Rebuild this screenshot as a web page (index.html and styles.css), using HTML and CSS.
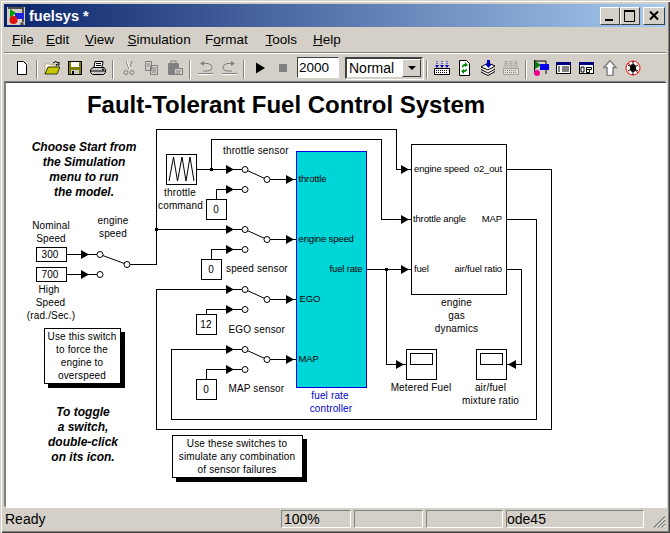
FILE: index.html
```html
<!DOCTYPE html>
<html lang="en">
<head>
    <meta charset="UTF-8">
    <title>fuelsys</title>
    <link rel="stylesheet" href="styles.css">
</head>
<body>
<div class="window">
    <div class="titlebar">
        <svg class="app-icon" width="18" height="18" viewBox="0 0 18 18">
            <rect x="0" y="0" width="18" height="18" fill="#d4d0c8"/>
            <path d="M1 1h15v14" fill="none" stroke="#222" stroke-width="1.5"/>
            <path d="M3 2v9l6-5z" fill="#00a000"/>
            <rect x="8" y="6" width="9" height="6" fill="#2020e0"/>
            <circle cx="6.5" cy="13" r="4" fill="#e01010"/>
            <path d="M15 15v3M13 17h4" stroke="#222"/>
        </svg>
        <span class="title-text">fuelsys *</span>
        <div class="caption-btns">
            <div class="caption-btn"><svg width="18" height="16"><rect x="4" y="11" width="8" height="2" fill="#000"/></svg></div>
            <div class="caption-btn"><svg width="18" height="16"><path d="M3 2.5h11M3.5 2v11.5h10V2" fill="none" stroke="#000"/><rect x="3" y="2" width="11" height="2" fill="#000"/></svg></div>
            <div class="caption-btn close"><svg width="18" height="16"><path d="M5 3.5l8 8M13 3.5l-8 8" stroke="#000" stroke-width="2"/></svg></div>
        </div>
    </div>

    <div class="menubar">
        <span><u>F</u>ile</span>
        <span><u>E</u>dit</span>
        <span><u>V</u>iew</span>
        <span><u>S</u>imulation</span>
        <span>F<u>o</u>rmat</span>
        <span><u>T</u>ools</span>
        <span><u>H</u>elp</span>
    </div>

    <div class="toolbar">
        <div class="tool"><svg width="16" height="16" viewBox="0 0 16 16"><path d="M3.5 1.5h6l3 3v10h-9z" fill="#fff" stroke="#000"/></svg></div>
        <div class="sep"></div>
        <div class="tool"><svg width="16" height="16" viewBox="0 0 16 16"><path d="M1 4h5l1 1h5v2H4L1 14z" fill="#fff" stroke="#808000" stroke-width=".5"/><path d="M1 14l3-7h12l-3 7z" fill="#c8c800" stroke="#000" stroke-width=".7"/><path d="M9 3q3-3 5 0l1-1v3h-3l1-1" fill="none" stroke="#000"/></svg></div>
        <div class="tool"><svg width="16" height="16" viewBox="0 0 16 16"><rect x="1.5" y="1.5" width="13" height="13" fill="#808000" stroke="#000"/><rect x="4" y="2" width="8" height="5" fill="#fff"/><rect x="4" y="10" width="8" height="4" fill="#c8c8c8"/><rect x="5" y="11" width="2" height="3" fill="#000"/></svg></div>
        <div class="tool"><svg width="16" height="16" viewBox="0 0 16 16"><path d="M5 1.5h8l-1 6H4z" fill="#fff" stroke="#000"/><path d="M6 3.5h5M6 5.5h5" stroke="#000"/><path d="M3 7.5h11l1.500 2v3l-2 2H2.500l-2-2v-3z" fill="#c8c8c8" stroke="#000"/><path d="M1 11h14" stroke="#000"/><circle cx="13" cy="9.500" r="1" fill="#000"/></svg></div>
        <div class="sep wide"></div>
        <div class="tool"><svg width="16" height="16" viewBox="0 0 16 16"><path d="M5 1l3 8M11 1L8 9" stroke="#808080"/><circle cx="5" cy="12.500" r="2" fill="none" stroke="#808080"/><circle cx="11" cy="12.500" r="2" fill="none" stroke="#808080"/><path d="M6 1l3 8" stroke="#fff"/></svg></div>
        <div class="tool"><svg width="16" height="16" viewBox="0 0 16 16"><path d="M1.500 1.500h6v9h-6zM6.500 5.500h7v9h-7z" fill="#d4d0c8" stroke="#808080"/><path d="M3 4h3M3 6h2M8 8h4M8 10h4M8 12h4" stroke="#808080"/></svg></div>
        <div class="tool"><svg width="16" height="16" viewBox="0 0 16 16"><rect x="1" y="3" width="11" height="12" rx="1" fill="#808080"/><rect x="4" y="1" width="5" height="3" fill="none" stroke="#808080"/><rect x="7.500" y="8.500" width="8" height="6" fill="#d4d0c8" stroke="#808080"/><path d="M9 11h5M9 13h4" stroke="#808080"/></svg></div>
        <div class="sep wide"></div>
        <div class="tool"><svg width="16" height="16" viewBox="0 0 16 16"><path d="M0 13.500h15" stroke="#808080"/><path d="M0 14.500h15" stroke="#fff"/><path d="M4 3.500h6q4 1 4 4t-4 3.500H5" fill="none" stroke="#808080"/><path d="M6 1L2 3.500 6 6z" fill="#808080"/></svg></div>
        <div class="tool"><svg width="16" height="16" viewBox="0 0 16 16"><path d="M1 13.500h15" stroke="#808080"/><path d="M1 14.500h15" stroke="#fff"/><path d="M12 3.500H6q-4 1-4 4t4 3.500h5" fill="none" stroke="#808080"/><path d="M10 1l4 2.500L10 6z" fill="#808080"/></svg></div>
        <div class="sep wide"></div>
        <div class="tool"><svg width="16" height="16" viewBox="0 0 16 16"><path d="M4 2.500L13 8l-9 5.500z" fill="#000"/></svg></div>
        <div class="tool"><svg width="16" height="16" viewBox="0 0 16 16"><rect x="4" y="4" width="8" height="8" fill="#808080"/></svg></div>
        <input class="stop-time" type="text" value="2000">
        <div class="select">
            <span>Normal</span>
            <div class="select-btn"><svg width="10" height="6"><path d="M1 1h8L5 5z" fill="#000"/></svg></div>
        </div>
        <div class="sep"></div>
        <div class="tool"><svg width="16" height="16" viewBox="0 0 16 16"><path d="M.5 8.500h15v6H.5z" fill="#fff" stroke="#000"/><path d="M2 10.500h12M2 12.500h12" stroke="#000" stroke-dasharray="1 1"/><path d="M3 1v5M8 1v5M13 1v5" stroke="#0000c0" stroke-dasharray="1 1"/><path d="M1 5l2 3 2-3zM6 5l2 3 2-3zM11 5l2 3 2-3z" fill="#0000c0"/></svg></div>
        <div class="tool"><svg width="16" height="16" viewBox="0 0 16 16"><path d="M2.500.5h7l3 3v12h-10z" fill="#fff" stroke="#000"/><path d="M5 7q0-3 3-3V2l3 3-3 2V6q-2 0-2 2zM10 9q0 3-3 3v2l-3-3 3-2v1q2 0 2-1z" fill="#008000"/></svg></div>
        <div class="tool"><svg width="16" height="16" viewBox="0 0 16 16"><path d="M1 7l7-4 7 3-7 4zM1 9.500l7 3.500 7-4M1 12l7 3.500 7-4" fill="#fff" stroke="#000"/><path d="M7 0h3v4h2L8.500 8 5 4h2z" fill="#0000c0"/></svg></div>
        <div class="tool"><svg width="16" height="16" viewBox="0 0 16 16"><path d="M.5 8.500h15v6H.5z" fill="#e4e0d8" stroke="#a0a0a0"/><path d="M2 10.500h12M2 12.500h12" stroke="#808080" stroke-dasharray="1 1"/><rect x="1" y="1" width="14" height="7" fill="#c8c4bc"/><path d="M3 1v5M8 1v5M13 1v5" stroke="#808080" stroke-dasharray="1 1"/></svg></div>
        <div class="sep"></div>
        <div class="tool"><svg width="16" height="16" viewBox="0 0 16 16"><path d="M1.500 0v13M1.500 1H13v13" fill="none" stroke="#000"/><path d="M2 1v8l6-4z" fill="#008000"/><rect x="7" y="4" width="9" height="6" fill="#0000f0"/><circle cx="4" cy="13" r="3" fill="#f00090"/></svg></div>
        <div class="tool"><svg width="16" height="16" viewBox="0 0 16 16"><rect x=".5" y="2.500" width="14" height="11" fill="#fff" stroke="#000"/><rect x="0" y="2" width="15" height="3" fill="#000080"/><path d="M2 7h2M2 9h2M2 11h2M6 7h7M6 9h7M6 11h7" stroke="#000"/></svg></div>
        <div class="tool"><svg width="16" height="16" viewBox="0 0 16 16"><rect x=".5" y="2.500" width="14" height="11" fill="#fff" stroke="#000"/><rect x="0" y="2" width="15" height="3" fill="#000080"/><path d="M2 7h3v5H2zM7.500 7.500h5v2h-5zM7.500 9.500h3v3h-3z" fill="none" stroke="#000"/></svg></div>
        <div class="tool"><svg width="16" height="16" viewBox="0 0 16 16"><path d="M8 .5l6 7h-3v8H5v-8H2z" fill="#fff" stroke="#808080" stroke-width="1.500"/></svg></div>
        <div class="tool"><svg width="16" height="16" viewBox="0 0 16 16"><circle cx="8" cy="8" r="7" fill="#fff" stroke="#f00"/><path d="M3 3l10 10" stroke="#f00"/><path d="M3 5l10 6M3 11l10-6M8 1v14" stroke="#000"/><ellipse cx="8" cy="8" rx="3" ry="4" fill="#000"/></svg></div>
    </div>

    <div class="canvas">
        <svg class="diagram" width="659" height="423" viewBox="6 83 659 423">
            <defs>
                <path id="arr" d="M0,-4.500 L8,0 L0,4.500z" fill="#000"/>
            </defs>

            <!-- wires -->
            <g class="wires">
                <path d="M66.500 254.500H100M66.500 274.500H100"/>
                <path d="M127 264.500H156.500V129.500H396.500V169.500H411"/>
                <path d="M156.500 229.500H245"/>
                <path d="M197 169.500H245M211.500 169.500V139.500H381.500V219.500H411"/>
                <path d="M216.500 199V189.500H245M211.500 259V249.500H245M206.500 314V309.500H245M206.500 379V369.500H245"/>
                <path d="M507 169.500H551.500V429.500H156.500V289.500H245"/>
                <path d="M507 219.500H536.500V419.500H171.500V349.500H245"/>
                <path d="M507 269.500H521.500V364.500H507"/>
                <path d="M366 269.500H411M386.500 269.500V364.500H406"/>
                <path d="M267 179.500H296M267 239.500H296M267 299.500H296M267 359.500H296"/>
            </g>

            <!-- switches -->
            <g class="sw">
                <path d="M100 254.500L127 264.500"/>
                <path d="M245 169.500L267 179.500"/>
                <path d="M245 229.500L267 239.500"/>
                <path d="M245 289.500L267 299.500"/>
                <path d="M245 349.500L267 359.500"/>
            </g>
            <g class="pins">
                <circle cx="100" cy="254.500" r="3"/><circle cx="100" cy="274.500" r="3"/><circle cx="127" cy="264.500" r="3"/>
                <circle cx="245" cy="169.500" r="3"/><circle cx="245" cy="189.500" r="3"/><circle cx="267" cy="179.500" r="3"/>
                <circle cx="245" cy="229.500" r="3"/><circle cx="245" cy="249.500" r="3"/><circle cx="267" cy="239.500" r="3"/>
                <circle cx="245" cy="289.500" r="3"/><circle cx="245" cy="309.500" r="3"/><circle cx="267" cy="299.500" r="3"/>
                <circle cx="245" cy="349.500" r="3"/><circle cx="245" cy="369.500" r="3"/><circle cx="267" cy="359.500" r="3"/>
            </g>

            <!-- arrows -->
            <use href="#arr" x="81" y="254.500"/><use href="#arr" x="81" y="274.500"/>
            <use href="#arr" x="226" y="169.500"/><use href="#arr" x="226" y="189.500"/>
            <use href="#arr" x="226" y="229.500"/><use href="#arr" x="226" y="249.500"/>
            <use href="#arr" x="226" y="289.500"/><use href="#arr" x="226" y="309.500"/>
            <use href="#arr" x="226" y="349.500"/><use href="#arr" x="226" y="369.500"/>
            <use href="#arr" x="286" y="179.500"/><use href="#arr" x="286" y="239.500"/>
            <use href="#arr" x="286" y="299.500"/><use href="#arr" x="286" y="359.500"/>
            <use href="#arr" x="401" y="169.500"/><use href="#arr" x="401" y="219.500"/><use href="#arr" x="401" y="269.500"/>
            <use href="#arr" x="396" y="364.500"/>
            <path d="M516 360L508 364.500L516 369z" fill="#000"/>

            <!-- junction dots -->
            <rect x="155" y="228" width="3" height="3"/>
            <rect x="210" y="168" width="3" height="3"/>
            <rect x="385" y="268" width="3" height="3"/>

            <!-- blocks -->
            <g class="block">
                <rect x="36.500" y="247.500" width="30" height="14"/>
                <rect x="36.500" y="267.500" width="30" height="14"/>
                <rect x="166.500" y="154.500" width="30" height="30"/>
                <rect x="206.500" y="199.500" width="20" height="20"/>
                <rect x="201.500" y="259.500" width="20" height="20"/>
                <rect x="196.500" y="314.500" width="20" height="20"/>
                <rect x="196.500" y="379.500" width="20" height="20"/>
                <rect x="411.500" y="144.500" width="95" height="150"/>
                <rect x="406.500" y="349.500" width="30" height="30"/>
                <rect x="410.500" y="353.500" width="22" height="11"/>
                <rect x="476.500" y="349.500" width="30" height="30"/>
                <rect x="480.500" y="353.500" width="22" height="11"/>
            </g>
            <path class="zigzag" d="M169 181L173.500 157L177.500 181L182 157L186 181L190 157L194 181"/>
            <rect class="cyan" x="296.500" y="151.500" width="70" height="236"/>

            <!-- note boxes -->
            <rect x="48" y="332" width="77" height="56" fill="#000"/>
            <rect class="note" x="44.500" y="328.500" width="76" height="55"/>
            <rect x="176" y="439" width="131" height="43" fill="#000"/>
            <rect class="note" x="172.500" y="435.500" width="130" height="42"/>

            <!-- title and hints -->
            <text class="heading" x="286" y="113">Fault-Tolerant Fuel Control System</text>
            <g class="hint">
                <text x="84" y="151">Choose Start from</text>
                <text x="84" y="166">the Simulation</text>
                <text x="84" y="181">menu to run</text>
                <text x="84" y="196">the model.</text>
                <text x="83" y="416">To toggle</text>
                <text x="83" y="431">a switch,</text>
                <text x="83" y="446">double-click</text>
                <text x="83" y="461">on its icon.</text>
            </g>

            <!-- labels -->
            <g class="lbl">
                <text x="51" y="229">Nominal</text>
                <text x="51" y="242">Speed</text>
                <text x="113" y="224">engine</text>
                <text x="113" y="237">speed</text>
                <text x="50" y="258">300</text>
                <text x="50" y="278">700</text>
                <text x="49" y="293">High</text>
                <text x="50.500" y="306">Speed</text>
                <text x="51" y="319">(rad./Sec.)</text>
                <text x="180" y="196">throttle</text>
                <text x="180.500" y="209">command</text>
                <text x="216" y="213">0</text>
                <text x="211" y="273">0</text>
                <text x="206" y="328">12</text>
                <text x="206" y="393">0</text>
                <text x="82" y="340">Use this switch</text>
                <text x="82" y="353">to force the</text>
                <text x="82" y="366">engine to</text>
                <text x="82" y="379">overspeed</text>
                <text x="237" y="447">Use these switches to</text>
                <text x="237" y="460">simulate any combination</text>
                <text x="237" y="473">of sensor failures</text>
                <text x="456.500" y="306">engine</text>
                <text x="456.500" y="319">gas</text>
                <text x="456.500" y="332">dynamics</text>
                <text x="421" y="391">Metered Fuel</text>
                <text x="490.500" y="391">air/fuel</text>
                <text x="490.500" y="404">mixture ratio</text>
                <text class="blue" x="330" y="399">fuel rate</text>
                <text class="blue" x="331" y="412">controller</text>
                <text class="start" x="223" y="154">throttle sensor</text>
                <text class="start" x="226" y="272">speed sensor</text>
                <text class="start" x="228.500" y="333">EGO sensor</text>
                <text class="start" x="228.500" y="392">MAP sensor</text>
            </g>

            <!-- port names -->
            <g class="port">
                <text x="298.500" y="182">throttle</text>
                <text x="298.500" y="242">engine speed</text>
                <text x="299.500" y="302">EGO</text>
                <text x="298.500" y="362">MAP</text>
                <text class="end" x="362.500" y="272">fuel rate</text>
                <text x="414" y="172">engine speed</text>
                <text x="413" y="222">throttle angle</text>
                <text x="414" y="272">fuel</text>
                <text class="end" x="502" y="172">o2_out</text>
                <text class="end" x="502" y="222">MAP</text>
                <text class="end" x="502" y="272">air/fuel ratio</text>
            </g>
        </svg>
    </div>

    <div class="statusbar">
        <span class="status-ready">Ready</span>
        <span class="panel p1">100%</span>
        <span class="panel p2"></span>
        <span class="panel p3"></span>
        <span class="panel p4">ode45</span>
        <svg class="grip" width="14" height="14" viewBox="0 0 14 14">
            <path d="M13 1L1 13M13 5L5 13M13 9L9 13" stroke="#808080" stroke-width="1.500"/>
            <path d="M13 3L3 13M13 7L7 13M13 11L11 13" stroke="#fff"/>
        </svg>
    </div>
</div>
</body>
</html>
```

FILE: styles.css
```css
html, body {
    margin: 0;
    padding: 0;
    background: #d4d0c8;
}

.window {
    width: 670px;
    height: 533px;
    box-sizing: border-box;
    padding: 4px 4px 4px 4px;
    background: #d4d0c8;
    box-shadow: inset 1px 1px 0 #d4d0c8, inset 2px 2px 0 #fff, inset -1px -1px 0 #404040, inset -2px -2px 0 #808080;
    display: flex;
    flex-direction: column;
    font-family: "Liberation Sans", Arial, sans-serif;
    overflow: hidden;
}

.titlebar {
    height: 23px;
    flex: none;
    display: flex;
    align-items: center;
    padding-left: 3px;
    background: linear-gradient(to right, #0a246a, #a6caf0);
}

.app-icon {
    flex: none;
}

.title-text {
    margin-left: 4px;
    color: #fff;
    font-weight: bold;
    font-size: 14.5px;
}

.caption-btns {
    margin-left: auto;
    display: flex;
    padding-right: 1px;
}

.caption-btn {
    width: 20px;
    height: 18px;
    box-sizing: border-box;
    background: #d4d0c8;
    border: 1px solid;
    border-color: #fff #404040 #404040 #fff;
    display: flex;
    align-items: center;
    justify-content: center;
}

.caption-btn.close {
    width: 22px;
    margin-left: 3px;
}

.menubar {
    height: 25px;
    flex: none;
    box-sizing: border-box;
    display: grid;
    grid-template-columns: 34px 39px 42.6px 77.4px 60.6px 47.4px auto;
    align-items: center;
    padding: 0 0 0 8px;
    font-size: 13.5px;
    color: #000;
}

.toolbar {
    height: 30px;
    flex: none;
    box-sizing: border-box;
    display: flex;
    align-items: center;
    padding-left: 6px;
    border-top: 1px solid #808080;
    box-shadow: inset 0 1px 0 #fff;
}

.tool {
    width: 23px;
    height: 23px;
    flex: none;
    display: flex;
    align-items: center;
    justify-content: center;
}

.sep {
    width: 7px;
    height: 24px;
    flex: none;
    position: relative;
}

.sep.wide {
    width: 8px;
}

.sep::after {
    content: "";
    position: absolute;
    left: 3px;
    top: 4px;
    height: 19px;
    width: 1px;
    background: #808080;
    border-right: 1px solid #fff;
}

.stop-time {
    width: 42px;
    height: 21px;
    box-sizing: border-box;
    flex: none;
    margin-left: 3px;
    padding: 0 0 0 1px;
    border: 1px solid;
    border-color: #404040 #fff #fff #404040;
    font-family: "Liberation Sans", Arial, sans-serif;
    font-size: 13.5px;
    color: #000;
    background: #fff;
    outline: none;
}

.select {
    width: 78px;
    height: 22px;
    box-sizing: border-box;
    flex: none;
    margin-left: 6px;
    display: flex;
    background: #fff;
    border: 2px solid;
    border-color: #404040 #d4d0c8 #d4d0c8 #404040;
    box-shadow: 1px 1px 0 #fff;
    font-size: 14px;
}

.select span {
    flex: 1;
    padding-left: 2px;
    line-height: 18px;
}

.select-btn {
    width: 19px;
    background: #d4d0c8;
    border: 1px solid;
    border-color: #fff #404040 #404040 #fff;
    box-sizing: border-box;
    display: flex;
    align-items: center;
    justify-content: center;
}

.canvas {
    flex: none;
    height: 424px;
    margin: 0 0 0 1px;
    background: #fff;
    border-top: 1px solid #404040;
    border-left: 1px solid #808080;
    box-shadow: -1px -1px 0 #808080, 1px 1px 0 #fff;
    position: relative;
    overflow: hidden;
}

.diagram {
    display: block;
}

.wires path, .sw path {
    fill: none;
    stroke: #000;
    stroke-width: 1;
}

.wires path {
    shape-rendering: crispEdges;
}

.pins circle {
    fill: #fff;
    stroke: #000;
}

.block rect {
    fill: #fff;
    stroke: #000;
    shape-rendering: crispEdges;
}

.zigzag {
    fill: none;
    stroke: #000;
}

.cyan {
    fill: #00d5d8;
    stroke: #0000e0;
    shape-rendering: crispEdges;
}

.note {
    fill: #fff;
    stroke: #000;
    shape-rendering: crispEdges;
}

.heading {
    font-size: 24px;
    font-weight: bold;
    text-anchor: middle;
}

.hint text {
    font-size: 12px;
    font-weight: bold;
    font-style: italic;
    text-anchor: middle;
}

.lbl text {
    font-size: 10px;
    letter-spacing: 0.15px;
    text-anchor: middle;
}

.lbl text.start {
    text-anchor: start;
}

.lbl text.blue {
    fill: #0000d0;
}

.port text {
    font-size: 9.5px;
    letter-spacing: -0.15px;
}

.port text.end {
    text-anchor: end;
}

.statusbar {
    flex: 1;
    display: flex;
    align-items: center;
    padding-top: 2px;
    font-size: 14px;
    position: relative;
}

.status-ready {
    width: 277px;
    padding-left: 1px;
    box-sizing: border-box;
    flex: none;
}

.panel {
    height: 18px;
    box-sizing: border-box;
    flex: none;
    border: 1px solid;
    border-color: #808080 #fff #fff #808080;
    line-height: 17px;
    margin-right: 3px;
    white-space: nowrap;
}

.p1 { width: 70px; padding-left: 2px; }
.p2 { width: 69px; }
.p3 { width: 77px; }
.p4 { width: 138px; }

.grip {
    margin-left: 6px;
    align-self: flex-end;
}
```
